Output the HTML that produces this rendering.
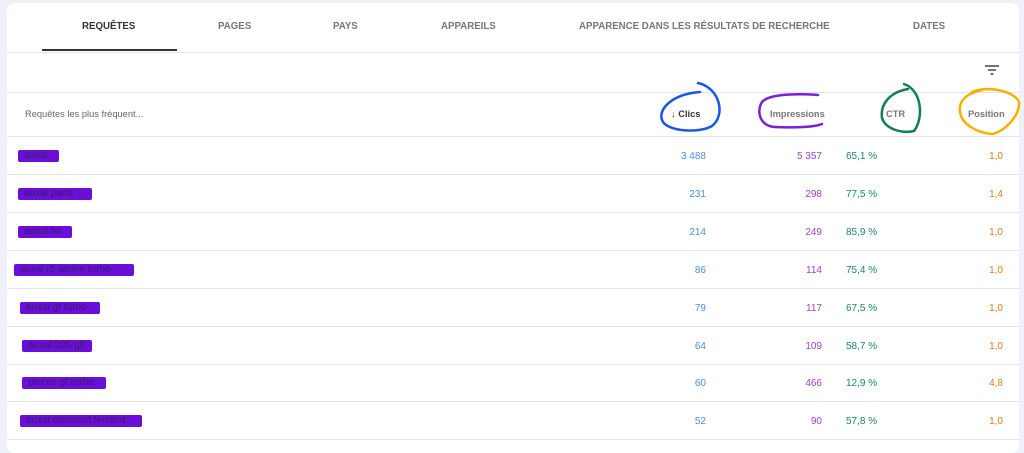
<!DOCTYPE html><html><head><meta charset="utf-8"><style>
body{margin:0;width:1024px;height:443px;background:#eef2f8;font-family:"Liberation Sans",Arial,sans-serif;overflow:hidden;position:relative}
.card{position:absolute;left:7px;top:3px;width:1012px;height:450px;background:#fff;border-radius:8px}
.tab{position:absolute;top:21px;font-size:9.7px;color:#777;font-weight:bold}
.line{position:absolute;left:7px;width:1012px;height:1px;background:#e3e3e3}
.hl{position:absolute;background:#6a0fd8;color:#3a1a6a;font-size:10px;height:12px;line-height:12px;padding-left:6px;white-space:nowrap;overflow:hidden;border-radius:2px}
.n{position:absolute;font-size:10px;text-align:right}
.c1{color:#4a8fe0;right:318px}.c2{color:#9b44c8;right:202px}.c3{color:#18866a;left:846px}.c4{color:#e37a1a;right:21px}
.h{position:absolute;top:109px;font-size:9.3px;color:#777;font-weight:bold}
</style></head><body>
<div class="card"></div>
<div class="tab" style="left:82px;color:#333">REQUÊTES</div>
<div style="position:absolute;left:42px;top:49px;width:135px;height:2px;background:#333"></div>
<div class="tab" style="left:218px">PAGES</div>
<div class="tab" style="left:333px">PAYS</div>
<div class="tab" style="left:441px">APPAREILS</div>
<div class="tab" style="left:579px">APPARENCE DANS LES RÉSULTATS DE RECHERCHE</div>
<div class="tab" style="left:913px">DATES</div>
<div class="line" style="top:52px"></div>
<div class="line" style="top:92px"></div>
<div class="line" style="top:136px"></div>
<svg style="position:absolute;left:984px;top:64px" width="16" height="12"><path d="M1 2H15M4 6H12M6.5 10H9.5" stroke="#444" stroke-width="1.6"/></svg>
<div style="position:absolute;left:25px;top:109px;font-size:9.3px;color:#666">Requêtes les plus fréquent...</div>
<div class="h" style="left:671px;color:#333">↓ Clics</div>
<div class="h" style="left:770px">Impressions</div>
<div class="h" style="left:886px">CTR</div>
<div class="h" style="left:968px">Position</div>
<svg style="position:absolute;left:0;top:0" width="1024" height="443" fill="none" stroke-width="2.5" stroke-linecap="round">
<path d="M698 83C720 88 726 115 712 126C700 133 670 132 663 122C656 110 672 94 700 92" stroke="#1a56e8"/>
<path d="M818 95C790 93 768 95 762 102C756 112 760 126 775 127C795 128 815 127 822 124" stroke="#7a1fd8"/>
<path d="M904 84C922 90 924 118 914 131C900 134 885 128 882 118C880 104 890 92 908 89" stroke="#0f8050"/>
<path d="M972 92C990 85 1015 92 1019 102C1020 116 1004 132 992 134C978 133 962 125 960 112C958 100 968 93 982 90" stroke="#f5b000"/>
</svg>
<div id="rows"></div>
<script>
var d=[["auxal",35,3488,"5357","65,1 %","1,0",18],["auxal parts",68,231,298,"77,5 %","1,4",18],["auxal hs",48,214,249,"85,9 %","1,0",18],["auxal r5 alpine turbo",114,86,114,"75,4 %","1,0",14],["auxal gt turbo",74,79,117,"67,5 %","1,0",20],["auxal 205 gti",64,64,109,"58,7 %","1,0",22],["pieces gt turbo",78,60,466,"12,9 %","4,8",22],["auxal clermont ferrand",116,52,90,"57,8 %","1,0",20]];
var h="";d.forEach(function(r,i){var y=151+i*37.9;h+='<div class="hl" style="left:'+r[6]+'px;top:'+(y-1)+'px;width:'+r[1]+'px">'+r[0]+'</div>';
var s=String(r[2]);if(s.length>3)s=s[0]+" "+s.slice(1);var t=String(r[3]);if(t.length>3)t=t[0]+" "+t.slice(1);
h+='<div class="n c1" style="top:'+y+'px">'+s+'</div><div class="n c2" style="top:'+y+'px">'+t+'</div><div class="n c3" style="top:'+y+'px">'+r[4]+'</div><div class="n c4" style="top:'+y+'px">'+r[5]+'</div><div class="line" style="top:'+Math.round(y+23)+'px"></div>';});
document.getElementById("rows").innerHTML=h;
</script>
</body></html>
